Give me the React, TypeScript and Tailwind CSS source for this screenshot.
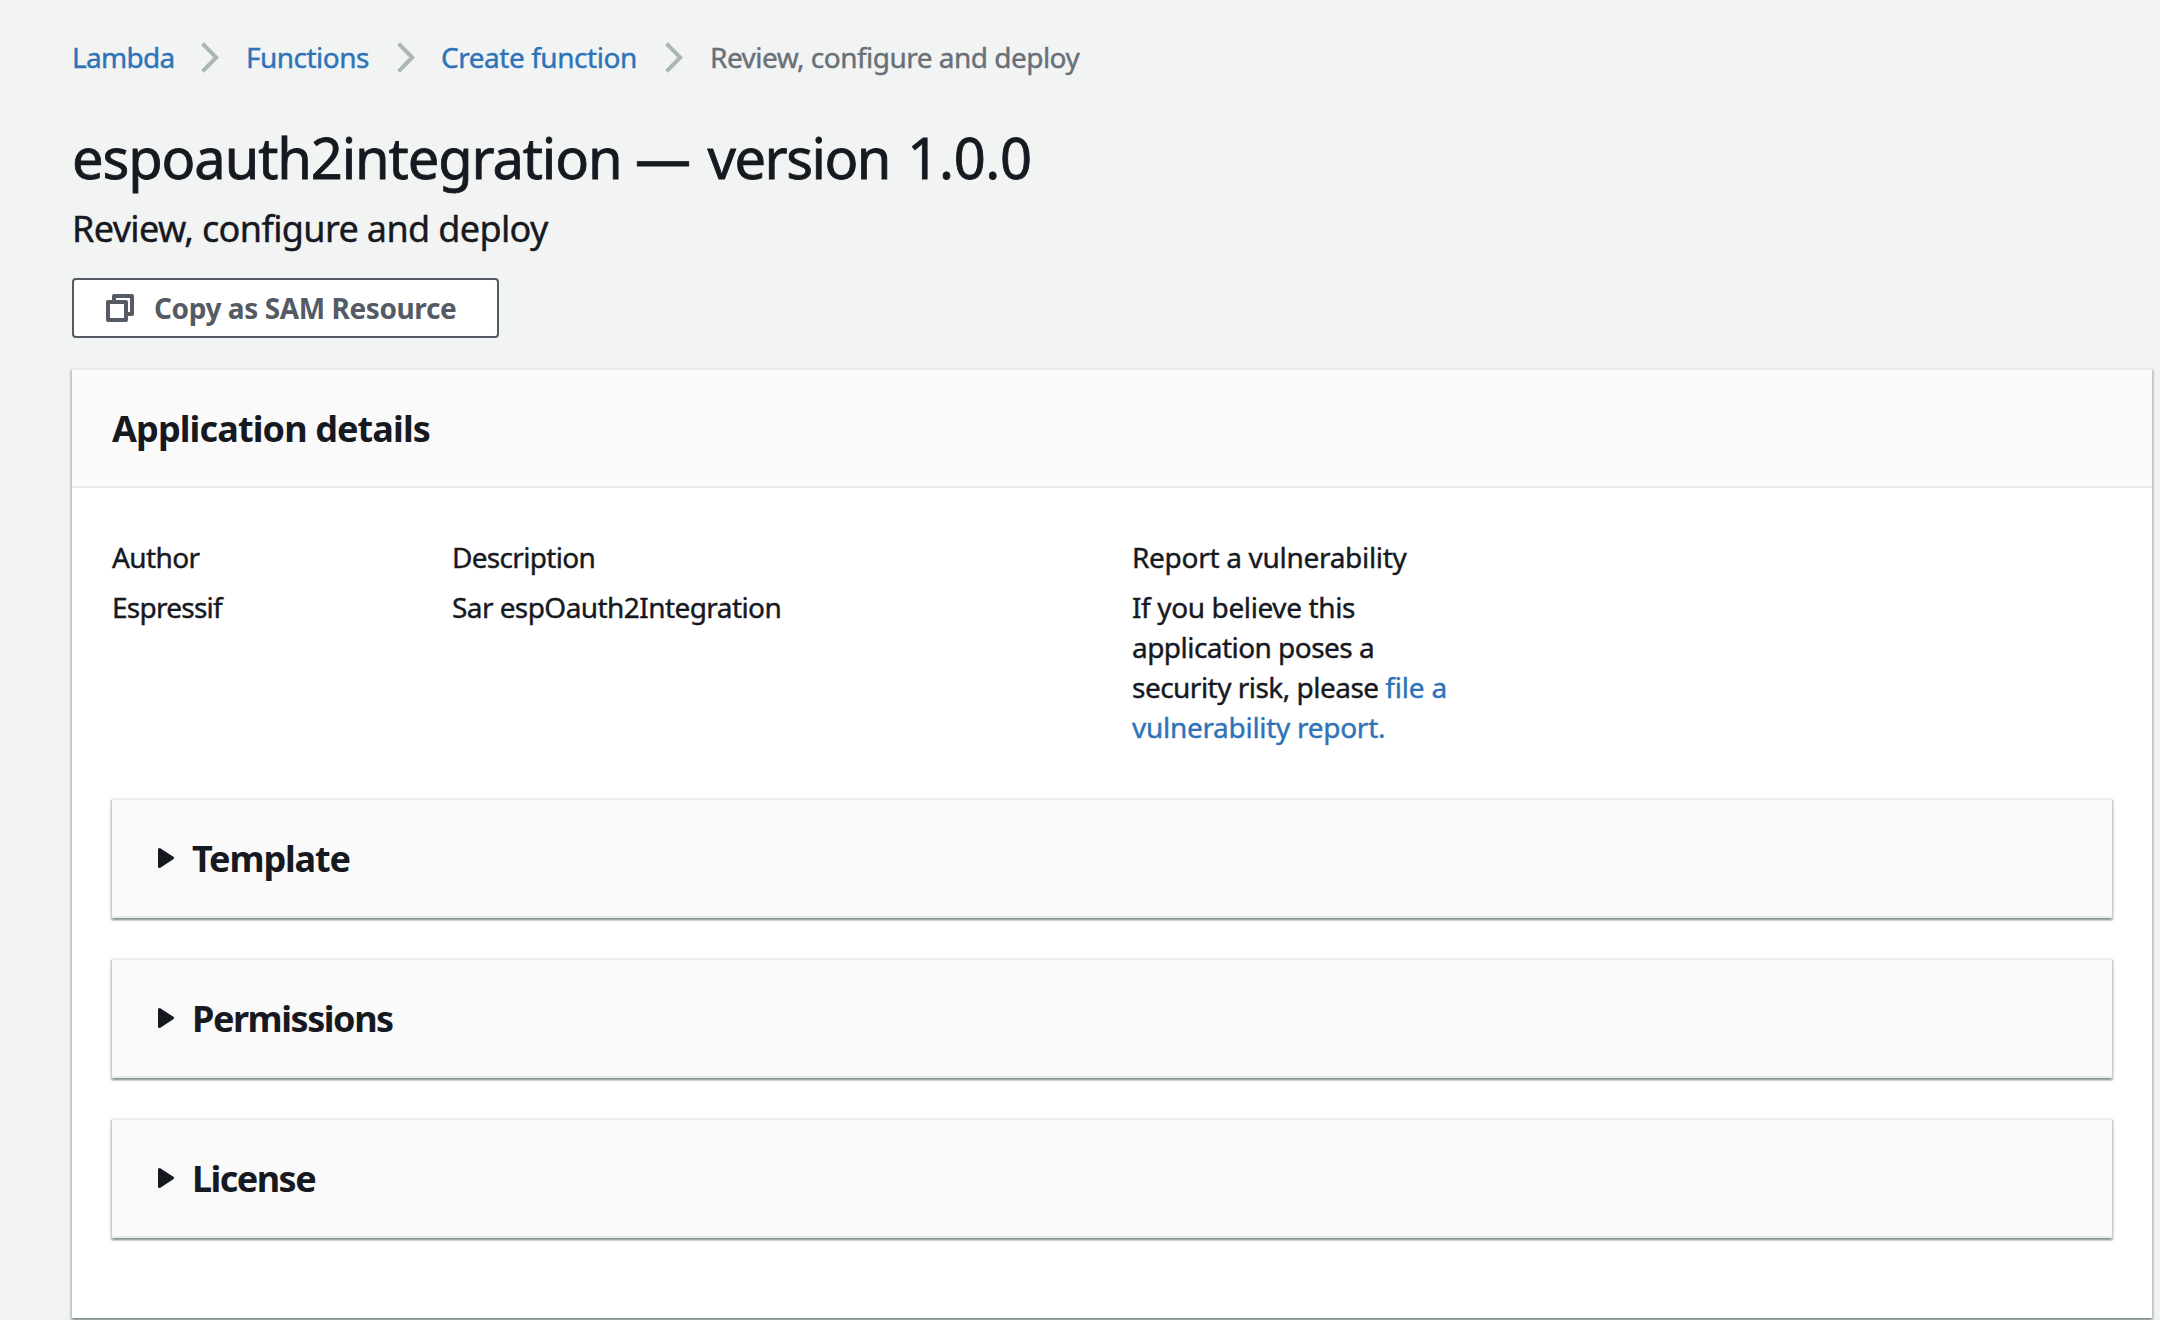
import React from "react";

function Chevron() {
  return (
    <svg className="h-[31px] w-[18px] shrink-0" viewBox="0 0 18 31" fill="none">
      <path d="M1.6 1.6 15.2 15.5 1.6 29.4" stroke="#aab7b8" strokeWidth="4" />
    </svg>
  );
}

function CopyIcon() {
  return (
    <svg className="h-7 w-7 shrink-0" viewBox="0 0 28 28" fill="none" stroke="#545b64" strokeWidth="4" strokeLinejoin="round">
      <path d="M2 8h18v18H2z" />
      <path d="M8 6V2h18v18h-4" />
    </svg>
  );
}

function Caret() {
  return (
    <svg className="h-5 w-4 shrink-0" viewBox="0 0 16 20">
      <path d="M1.5 1.5 14.5 10 1.5 18.5z" fill="#16191f" stroke="#16191f" strokeWidth="3" strokeLinejoin="round" />
    </svg>
  );
}

const panels = [
  { title: "Template", className: "tracking-[-1.14px]" },
  { title: "Permissions", className: "tracking-[-1.45px]" },
  { title: "License", className: "tracking-[-1.55px]" },
];

function ExpandablePanel({ title, className }: { title: string; className: string }) {
  return (
    <section className="flex h-[120px] items-center border-y-2 border-[#eaeded] bg-[#fafafa] pl-[46px] shadow-[0_2px_2px_0_rgba(0,28,36,0.3),2px_2px_2px_0_rgba(0,28,36,0.15),-2px_2px_2px_0_rgba(0,28,36,0.15)]">
      <Caret />
      <h3 className={`ml-[18px] pt-[2px] text-[36px] leading-[44px] font-bold ${className}`}>{title}</h3>
    </section>
  );
}

export default function App() {
  return (
    <main className="h-[1320px] w-[2160px] overflow-hidden bg-[#f2f3f3] pl-[72px] font-['Noto_Sans',sans-serif] text-[28px] leading-[40px] whitespace-nowrap text-[#16191f]">
      <nav className="flex h-[77px] pt-[37px] tracking-[-0.52px] text-[#2e73b8] [-webkit-text-stroke:0.4px]">
        <div className="flex h-10 items-center">
          <a className="w-[129px] tracking-[-0.7px]">Lambda</a>
          <Chevron />
          <a className="ml-[27px] w-[151px]">Functions</a>
          <Chevron />
          <a className="ml-[26px] w-[224px] tracking-[-0.46px]">Create function</a>
          <Chevron />
          <span className="ml-[27px] text-[#687078]">Review, configure and deploy</span>
        </div>
      </nav>

      <header className="pt-[45px]">
        <h1 className="text-[56px] leading-[70px] [-webkit-text-stroke:0.8px]">
          <span className="tracking-[-1.1px]">espoauth2integration </span>
          <span className="tracking-[1px]">— </span>
          <span className="tracking-[-1.5px]">version</span>
          <span className="ml-[3px] tracking-[-0.3px]"> 1.0.0</span>
        </h1>
        <p className="mt-[15px] text-[36px] leading-[44px] tracking-[-0.63px] [-webkit-text-stroke:0.4px]">
          Review, configure and deploy
        </p>
        <button className="mt-[27px] flex h-[60px] w-[427px] items-center rounded-[4px] border-2 border-[#545b64] bg-white pl-8 text-[#545b64]">
          <CopyIcon />
          <span className="-mt-px ml-5 font-bold tracking-[-0.41px]">Copy as SAM Resource</span>
        </button>
      </header>

      <section className="mt-[30px] h-[950px] w-[2080px] border-t-2 border-[#eaeded] bg-white shadow-[0_2px_2px_0_rgba(0,28,36,0.3),2px_2px_2px_0_rgba(0,28,36,0.15),-2px_2px_2px_0_rgba(0,28,36,0.15)]">
        <div className="flex h-[118px] items-center border-b-2 border-[#eaeded] bg-[#fafafa] px-10">
          <h2 className="pt-[2px] text-[36px] leading-[44px] font-bold tracking-[-0.88px]">Application details</h2>
        </div>

        <div className="px-10 pt-[49px]">
          <div className="grid h-[261px] grid-cols-[340px_680px_340px] content-start [-webkit-text-stroke:0.4px]">
            <div>
              <div className="tracking-[-0.6px]">Author</div>
              <div className="mt-[10px] tracking-[-0.75px]">Espressif</div>
            </div>
            <div>
              <div className="tracking-[-0.69px]">Description</div>
              <div className="mt-[10px] tracking-[-0.57px]">Sar espOauth2Integration</div>
            </div>
            <div>
              <div className="tracking-[-0.3px]">Report a vulnerability</div>
              <div className="mt-[10px]">
                <span className="tracking-[-0.38px]">If you believe this</span>
                <br />
                <span className="tracking-[-0.54px]">application poses a</span>
                <br />
                <span className="tracking-[-0.52px]">security risk, please </span>
                <a className="text-[#2e73b8]">
                  <span className="tracking-[-0.2px]">file a</span>
                  <br />
                  <span className="tracking-[-0.29px]">vulnerability report.</span>
                </a>
              </div>
            </div>
          </div>

          <div className="flex flex-col gap-10">
            {panels.map((panel) => (
              <ExpandablePanel key={panel.title} {...panel} />
            ))}
          </div>
        </div>
      </section>
    </main>
  );
}
